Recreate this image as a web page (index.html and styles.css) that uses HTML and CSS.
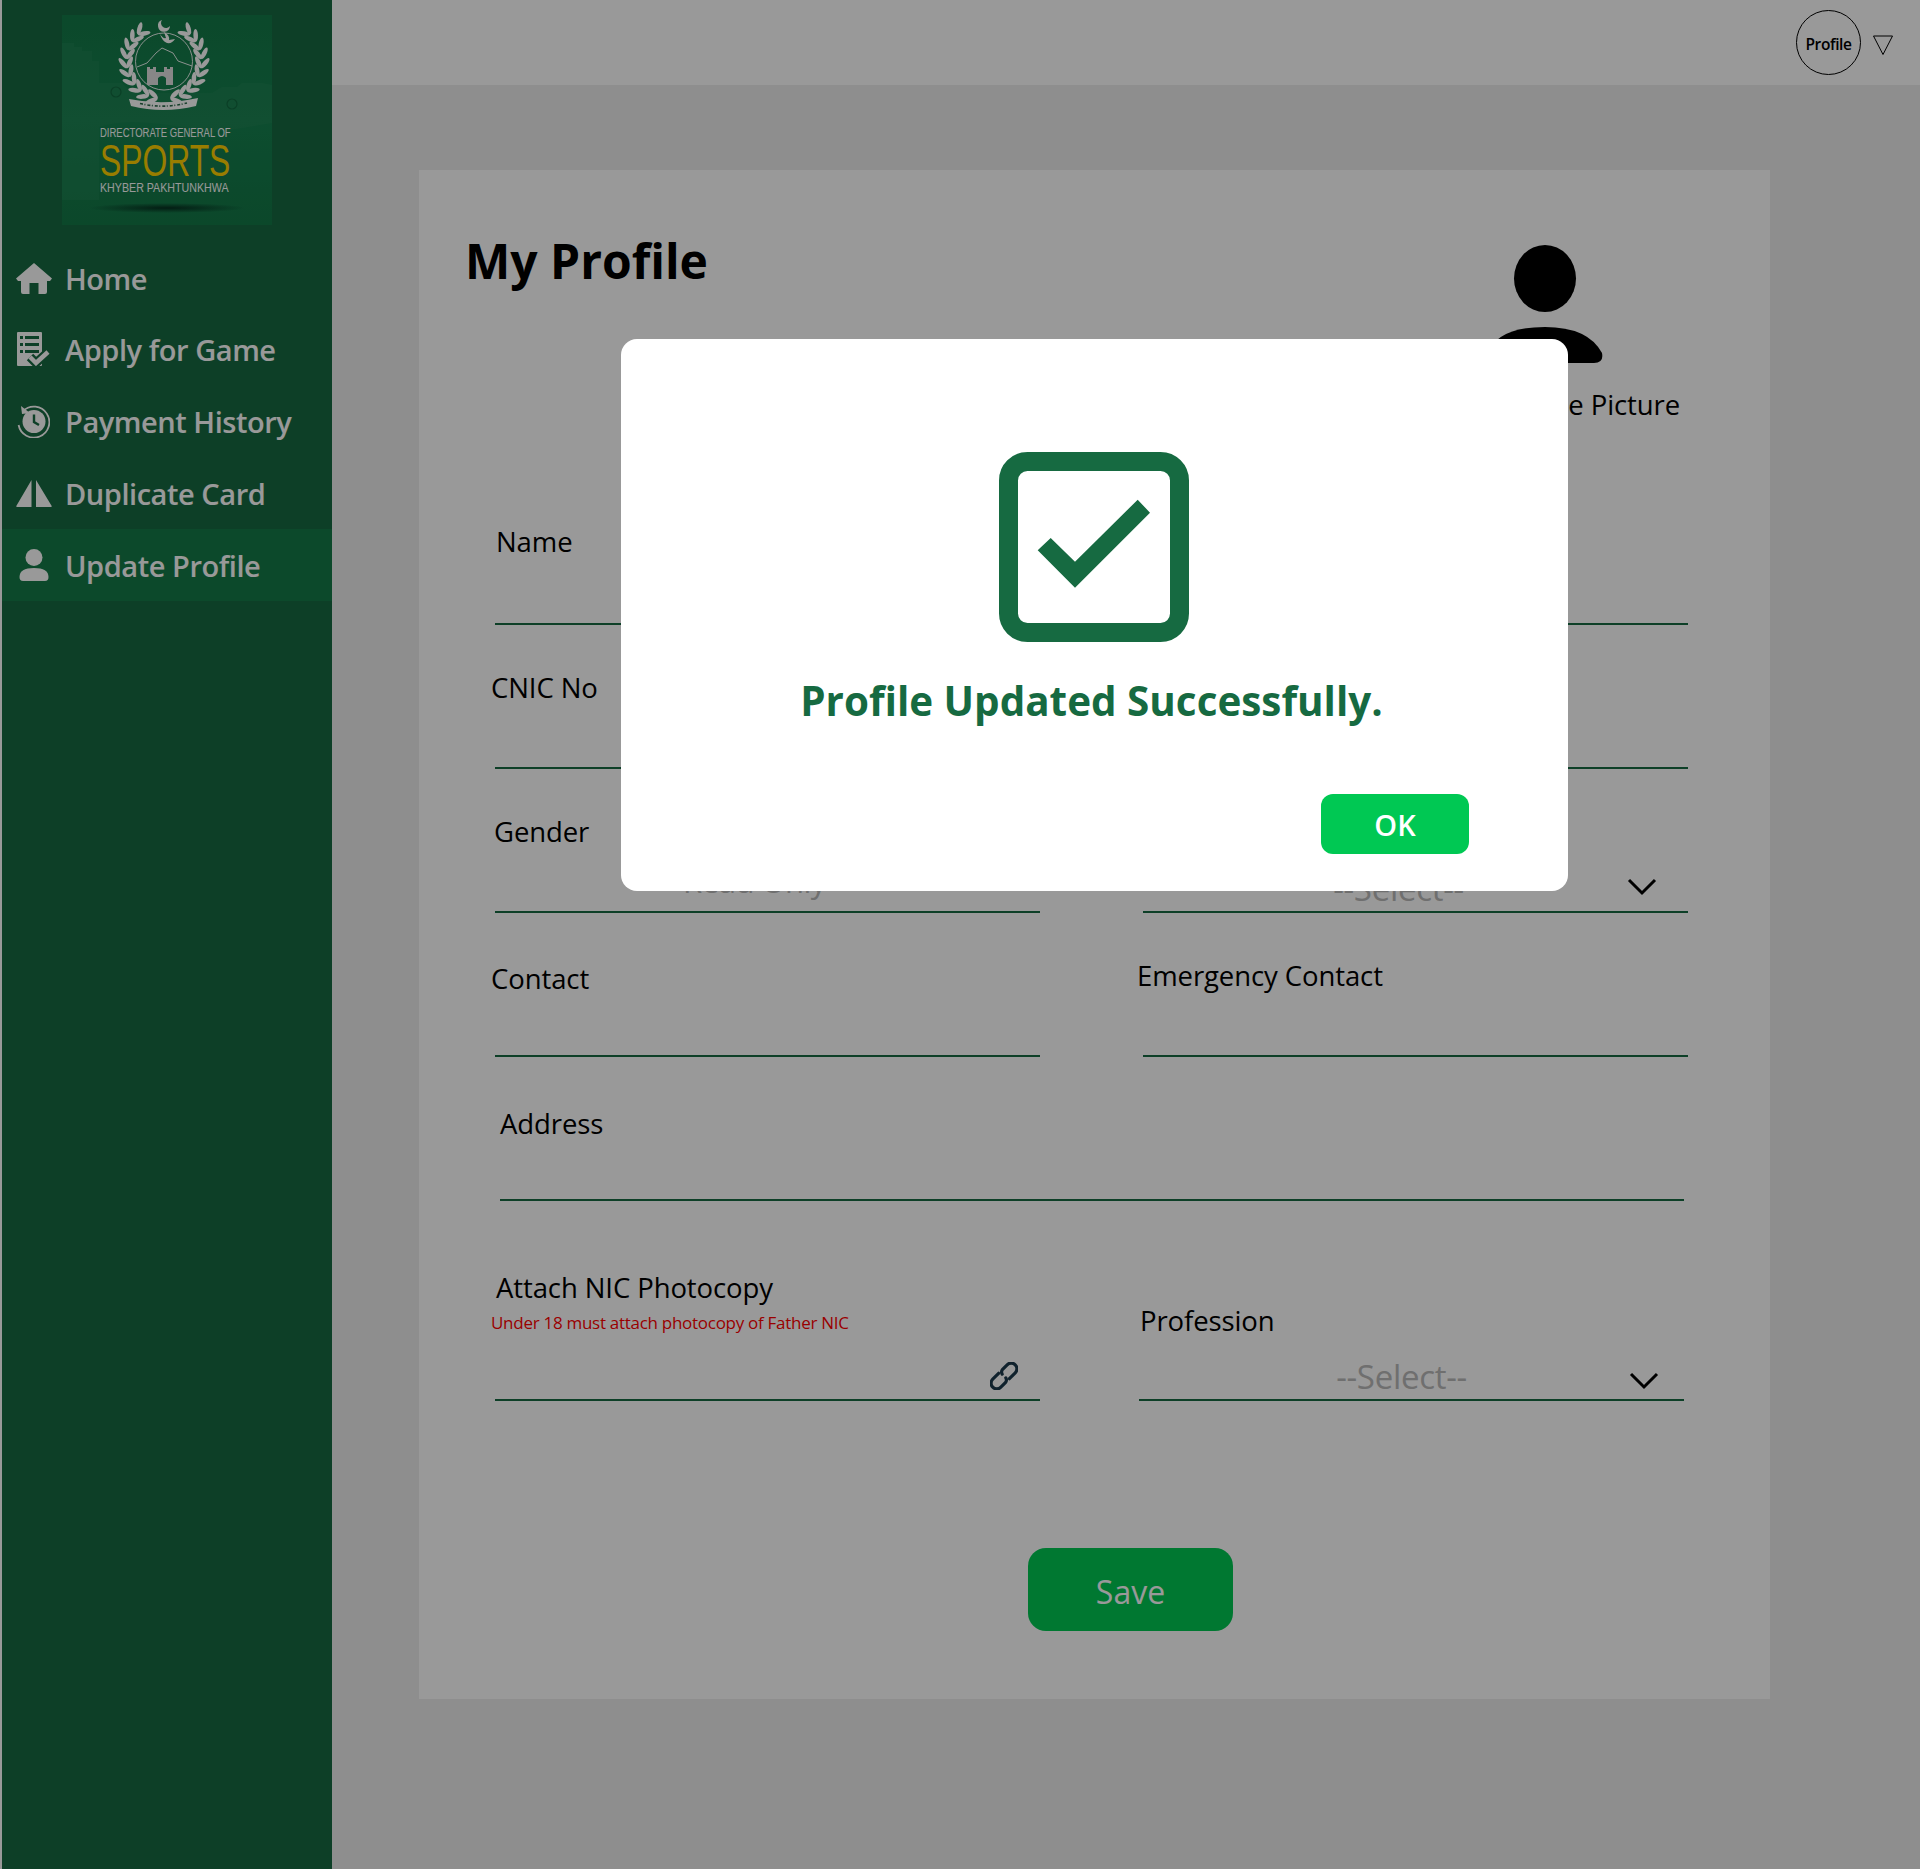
FILE: index.html

```html
<!DOCTYPE html>
<html lang="en">
<head>
    <meta charset="UTF-8">
    <meta name="viewport" content="width=device-width, initial-scale=1.0">
    <title>My Profile - Directorate General of Sports</title>
    <link rel="stylesheet" href="styles.css">
</head>
<body>

    <div class="app">
        <aside class="sidebar">
            <div class="logo-wrap">
                <svg class="logo" viewBox="0 0 210 210" width="210" height="210">
                    <defs>
                        <linearGradient id="logoBg" x1="0" y1="0" x2="0" y2="1">
                            <stop offset="0" stop-color="#137a48"/>
                            <stop offset="0.5" stop-color="#168150"/>
                            <stop offset="1" stop-color="#137847"/>
                        </linearGradient>
                        <radialGradient id="logoShadow">
                            <stop offset="0" stop-color="#04241a" stop-opacity="0.85"/>
                            <stop offset="1" stop-color="#04241a" stop-opacity="0"/>
                        </radialGradient>
                        <g id="leafPair" fill="#fff">
                            <ellipse rx="6.4" ry="2.3" transform="translate(4 -3.4) rotate(-32)"/>
                            <ellipse rx="6.4" ry="2.3" transform="translate(4 3.4) rotate(32)"/>
                        </g>
                        <g id="wreathSide">
                            <use href="#leafPair" transform="rotate(-168 102 46.5) translate(102 9)"/>
                            <use href="#leafPair" transform="rotate(-154 102 46.5) translate(102 9)"/>
                            <use href="#leafPair" transform="rotate(-140 102 46.5) translate(102 9)"/>
                            <use href="#leafPair" transform="rotate(-126 102 46.5) translate(102 9)"/>
                            <use href="#leafPair" transform="rotate(-112 102 46.5) translate(102 9)"/>
                            <use href="#leafPair" transform="rotate(-98 102 46.5) translate(102 9)"/>
                            <use href="#leafPair" transform="rotate(-84 102 46.5) translate(102 9)"/>
                            <use href="#leafPair" transform="rotate(-70 102 46.5) translate(102 9)"/>
                            <use href="#leafPair" transform="rotate(-56 102 46.5) translate(102 9)"/>
                            <use href="#leafPair" transform="rotate(-42 102 46.5) translate(102 9)"/>
                        </g>
                    </defs>
                    <rect width="210" height="210" fill="url(#logoBg)"/>
                    <!-- fort wall behind the emblem -->
                    <path d="M0 28 H12 V32 H20 V36 H30 V46 H37 V68 H60 L66 74 L80 78 H150 L160 72 H175 L180 68 H200 L210 70 V108 L150 118 Q70 100 37 112 V185 H0 Z" fill="#2a8a5c" opacity="0.35"/>
                    <circle cx="54" cy="77" r="5" fill="none" stroke="#126a40" stroke-width="1.2"/>
                    <circle cx="170" cy="89" r="5" fill="none" stroke="#126a40" stroke-width="1.2"/>
                    <!-- emblem -->
                    <g fill="none" stroke="#fff" stroke-width="0.9">
                        <circle cx="102" cy="46.5" r="28.5"/>
                        <path d="M75 52 L85 48 L94 38 L100 33 L111 38 L116 46 L130 51"/>
                    </g>
                    <path d="M100 5 a6 6 0 1 0 8 6 a5 5 0 0 1 -8 -6z" fill="#fff"/>
                    <path d="M98 19 q3 5 6 4 l-2 -6 q6 3 5 8 l6 -1 q-3 5 -8 4 q-5 -2 -7 -9z" fill="#fff"/>
                    <path d="M85 52 h3 v2 h3 v-2 h3 v5 h8 v-5 h3 v2 h3 v-2 h3 v18 h-7 v-7 q-4 -4 -8 0 v7 h-11z" fill="#e2e2e2"/>
                    <use href="#wreathSide"/>
                    <use href="#wreathSide" transform="translate(204 0) scale(-1 1)"/>
                    <path d="M67 84 Q101 91 136 83 L134 91 Q101 99 69 91 Z" fill="#fff"/>
                    <path d="M78 88.5 Q101 94 125 88" fill="none" stroke="#2b6b4c" stroke-width="1.6" stroke-dasharray="3 1.5 1 2"/>
                    <!-- logo wording -->
                    <text class="logo-small" transform="translate(38 122) scale(0.731 1)">DIRECTORATE GENERAL OF</text>
                    <text class="logo-big" transform="translate(38 161) scale(0.708 1)">SPORTS</text>
                    <text class="logo-small" transform="translate(38 177) scale(0.821 1)">KHYBER PAKHTUNKHWA</text>
                    <ellipse cx="105" cy="193" rx="78" ry="5" fill="url(#logoShadow)"/>
                </svg>
            </div>

            <nav class="nav">
                <a class="nav-item nav-home" href="#">
                    <span class="nav-icon">
                        <svg viewBox="0 0 36 31" width="36" height="31"><path d="M18 0 L36 15.5 L34 18 H31 V29 Q31 31 29 31 H22.5 V20 H13.5 V31 H7 Q5 31 5 29 V18 H2 L0 15.5 Z" fill="#fff"/></svg>
                    </span>
                    Home
                </a>
                <a class="nav-item" href="#">
                    <span class="nav-icon">
                        <svg viewBox="0 0 33 34" width="33" height="34">
                            <path d="M1 0 H24 Q25 0 25 1 V33 Q25 34 24 34 H1 Q0 34 0 33 V1 Q0 0 1 0 Z" fill="#fff"/>
                            <g fill="#166a41">
                                <rect x="3" y="4" width="3" height="3"/><rect x="8" y="4" width="14" height="3"/>
                                <rect x="3" y="11" width="3" height="3"/><rect x="8" y="11" width="14" height="3"/>
                                <rect x="3" y="18" width="3" height="3"/><rect x="8" y="18" width="14" height="3"/>
                            </g>
                            <path d="M13 25 L19 31 L31 20" fill="none" stroke="#166a41" stroke-width="9"/>
                            <path d="M13 25 L19 31 L31 20" fill="none" stroke="#fff" stroke-width="4.5"/>
                        </svg>
                    </span>
                    Apply for Game
                </a>
                <a class="nav-item" href="#">
                    <span class="nav-icon">
                        <svg viewBox="0 0 33 33" width="33" height="33">
                            <path d="M6 6 A15.5 15.5 0 1 1 1.6 20" fill="none" stroke="#fff" stroke-width="1.8"/>
                            <path d="M4 1 L5 9 L13 8 Z" fill="#fff"/>
                            <circle cx="17" cy="16.5" r="11.5" fill="#fff"/>
                            <path d="M17 9.5 V17 L22 20" fill="none" stroke="#166a41" stroke-width="2.4"/>
                        </svg>
                    </span>
                    Payment History
                </a>
                <a class="nav-item" href="#">
                    <span class="nav-icon">
                        <svg viewBox="0 0 36 27" width="36" height="27">
                            <path d="M15.5 0 V27 H1 Q0 27 0.3 26 Z M20 0 L35.7 26 Q36 27 35 27 H20 Z" fill="#fff"/>
                        </svg>
                    </span>
                    Duplicate Card
                </a>
                <a class="nav-item active" href="#">
                    <span class="nav-icon">
                        <svg viewBox="0 0 30 32" width="30" height="32">
                            <circle cx="15" cy="8.5" r="8.5" fill="#fff"/>
                            <path d="M0.5 28 Q0.5 19 15 19 Q29.5 19 29.5 28 Q29.5 32 26 32 H4 Q0.5 32 0.5 28 Z" fill="#fff"/>
                        </svg>
                    </span>
                    Update Profile
                </a>
            </nav>
        </aside>

        <div class="content">
            <header class="topbar">
                <div class="profile-circle">Profile</div>
                <svg class="profile-caret" viewBox="0 0 20 20" width="20" height="20"><path d="M0.5 1 H19.5 L10 19.5 Z" fill="none" stroke="#000" stroke-width="1"/></svg>
            </header>

            <main class="main">
                <section class="card">
                    <div class="card-head">
                        <h1>My Profile</h1>
                        <div class="avatar">
                            <svg viewBox="0 0 116 120" width="116" height="120">
                                <ellipse cx="57" cy="33.5" rx="31" ry="33.5" fill="#000"/>
                                <path d="M0 108 Q10 82 57 82 Q100 82 114 108 Q116 118 106 118 H8 Q-2 118 0 108 Z" fill="#000"/>
                            </svg>
                            <div class="avatar-label">Profile Picture</div>
                        </div>
                    </div>

                    <form class="form">
                        <div class="field field-name">
                            <label>Name</label>
                        </div>
                        <div class="field"></div>

                        <div class="field field-cnic">
                            <label>CNIC No</label>
                        </div>
                        <div class="field"></div>

                        <div class="field field-gender">
                            <label>Gender</label>
                            <div class="field-value value-readonly">Read Only</div>
                        </div>
                        <div class="field field-select">
                            <div class="field-value value-select">
                                <span>--Select--</span>
                                <svg class="chevron" viewBox="0 0 30 18" width="30" height="18"><path d="M2 2 L15 15 L28 2" fill="none" stroke="#000" stroke-width="3"/></svg>
                            </div>
                        </div>

                        <div class="field field-contact">
                            <label>Contact</label>
                        </div>
                        <div class="field field-emergency">
                            <label>Emergency Contact</label>
                        </div>

                        <div class="field field-address">
                            <label>Address</label>
                        </div>

                        <div class="field field-attach">
                            <label>Attach NIC Photocopy</label>
                            <div class="note">Under 18 must attach photocopy of Father NIC</div>
                            <div class="field-value value-attach">
                                <svg viewBox="3 3 22 22" width="28" height="28">
                                    <g transform="rotate(-45 14 14)" fill="none" stroke="#1b3a4b" stroke-width="2.5" stroke-linecap="round">
                                        <path d="M12.5 9.5 H6 a4.5 4.5 0 0 0 0 9 H11 a3.5 3.5 0 0 0 3 -2.5"/>
                                        <path d="M15.5 18.5 H22 a4.5 4.5 0 0 0 0 -9 H17 a3.5 3.5 0 0 0 -3 2.5"/>
                                    </g>
                                </svg>
                            </div>
                        </div>
                        <div class="field field-profession">
                            <label>Profession</label>
                            <div class="field-value value-select">
                                <span>--Select--</span>
                                <svg class="chevron" viewBox="0 0 30 18" width="30" height="18"><path d="M2 2 L15 15 L28 2" fill="none" stroke="#000" stroke-width="3"/></svg>
                            </div>
                        </div>
                    </form>

                    <button type="button" class="btn-save">Save</button>
                </section>
            </main>
        </div>
    </div>

    <div class="overlay">
        <div class="modal">
            <svg class="modal-icon" viewBox="0 0 190 190" width="190" height="190">
                <rect x="9.5" y="9.5" width="171" height="171" rx="19" fill="none" stroke="#166a41" stroke-width="19"/>
                <path d="M38.7 98.3 L51.7 86 L76 109.7 L138.7 47.7 L151 60.7 L76 135.7 Z" fill="#166a41"/>
            </svg>
            <h2>Profile Updated Successfully.</h2>
            <button type="button" class="btn-ok">OK</button>
        </div>
    </div>

</body>
</html>
```

FILE: styles.css

```css
* {
    box-sizing: border-box;
}
body {
    font-family: "Open Sans", "Noto Sans", sans-serif;
    background-color: #fff;
    margin: 0;
    padding: 0 0 0 2px;
    color: #000;
}
.app {
    display: flex;
    min-height: 100vh;
}

/* sidebar */
.sidebar {
    width: 330px;
    flex-shrink: 0;
    background-color: #166a41;
}
.logo-wrap {
    padding: 15px 0 0 60px;
    height: 243px;
}
.logo {
    display: block;
}
.logo-small {
    font-family: "Liberation Sans", sans-serif;
    font-size: 13px;
    fill: #fff;
}
.logo-big {
    font-family: "Liberation Sans", sans-serif;
    font-size: 45px;
    fill: #ffd000;
}
.nav-item {
    display: flex;
    align-items: center;
    height: 72px;
    padding-left: 13px;
    font-size: 29px;
    font-weight: 600;
    letter-spacing: -0.45px;
    color: #fff;
    text-decoration: none;
}
.nav-home {
    height: 70px;
}
.nav-item.active {
    background-color: #147b48;
}
.nav-icon {
    width: 37px;
    margin-right: 13px;
    display: flex;
    align-items: center;
    justify-content: center;
    flex-shrink: 0;
}
.nav-icon svg {
    display: block;
}

/* top bar */
.content {
    flex: 1;
    display: flex;
    flex-direction: column;
    background-color: #ededed;
}
.topbar {
    height: 85px;
    background-color: #fff;
    display: flex;
    align-items: center;
    justify-content: flex-end;
    padding: 0 27px 0 0;
}
.profile-circle {
    width: 65px;
    height: 65px;
    padding-top: 2px;
    border: 1px solid #000;
    border-radius: 50%;
    display: flex;
    align-items: center;
    justify-content: center;
    font-size: 15.5px;
    font-weight: 600;
    letter-spacing: -0.4px;
}
.profile-caret {
    margin: 4px 0 0 12px;
}

/* profile card */
.main {
    flex: 1;
    padding: 85px 150px 170px 87px;
}
.card {
    background-color: #fff;
    height: 1529px;
    padding: 0 82px 68px 76px;
}
.card-head {
    height: 311px;
    display: flex;
    justify-content: space-between;
}
.card-head h1 {
    margin: 55px 0 0 -30px;
    font-size: 48px;
    line-height: 72px;
    font-weight: 700;
    letter-spacing: 0;
}
.avatar {
    padding-top: 75px;
    margin-right: 8px;
    display: flex;
    flex-direction: column;
    align-items: flex-end;
}
.avatar svg {
    display: block;
    margin-right: 76px;
}
.avatar-label {
    font-size: 27.5px;
    line-height: 36px;
    margin-top: 22px;
    letter-spacing: -0.1px;
}

/* form */
.form {
    display: grid;
    grid-template-columns: 545px 545px;
    column-gap: 103px;
}
.field {
    height: 144px;
    border-bottom: 2px solid #166a41;
    display: flex;
    flex-direction: column;
    align-items: flex-start;
}
.field label {
    display: block;
    margin-top: 45px;
    font-size: 27.5px;
    line-height: 36px;
    letter-spacing: -0.1px;
}
.field-name label { margin: 43px 0 0 1px; }
.field-cnic label { margin-left: -4px; }
.field-gender label { margin-left: -1px; }
.field-contact label { margin: 48px 0 0 -4px; }
.field-emergency label { margin-left: -6px; }
.field-address {
    grid-column: 1 / -1;
    margin: 0 4px 0 5px;
}
.field-address label { margin-top: 49px; }
.field-attach {
    height: 200px;
}
.field-attach label {
    margin: 69px 0 0 1px;
}
.field-profession {
    height: 200px;
    margin: 0 4px 0 -4px;
}
.field-profession label {
    margin: 102px 0 0 1px;
}
.note {
    margin: 5px 0 0 -4px;
    font-size: 17px;
    line-height: 24px;
    letter-spacing: -0.28px;
    color: #f00;
}
.field-value {
    margin-top: auto;
    width: 100%;
    display: flex;
    align-items: center;
}
.value-readonly {
    height: 60px;
    justify-content: center;
    padding-right: 26px;
    font-size: 31px;
    color: #b9b9b9;
    letter-spacing: -0.5px;
}
.value-select {
    height: 46px;
    justify-content: center;
    padding-right: 34px;
    font-size: 33px;
    color: #b9b9b9;
    letter-spacing: -0.3px;
    position: relative;
}
.chevron {
    position: absolute;
    right: 31px;
    top: 13px;
}
.field-profession .value-select {
    padding-right: 20px;
}
.field-profession .chevron {
    right: 25px;
    top: 19px;
}
.value-attach {
    justify-content: flex-end;
    padding: 0 22px 9px 0;
}
.btn-save {
    display: block;
    width: 205px;
    height: 83px;
    margin: 147px 0 0 533px;
    padding-top: 4px;
    background-color: #00c853;
    color: #fff;
    font-family: inherit;
    font-size: 32px;
    border: none;
    border-radius: 18px;
}

/* success popup */
.overlay {
    position: fixed;
    inset: 0;
    background-color: rgba(0, 0, 0, 0.4);
}
.modal {
    width: 947px;
    height: 552px;
    margin: 339px 0 0 621px;
    background-color: #fff;
    border-radius: 16px;
    padding-top: 113px;
    display: flex;
    flex-direction: column;
    align-items: center;
}
.modal-icon {
    display: block;
    margin-left: -1px;
}
.modal h2 {
    margin: 33px 0 0 -6px;
    font-size: 40.4px;
    line-height: 52px;
    font-weight: 700;
    letter-spacing: 0;
    color: #166a41;
}
.btn-ok {
    width: 148px;
    height: 60px;
    margin: 67px 99px 0 auto;
    background-color: #00c853;
    color: #fff;
    font-family: inherit;
    font-size: 29px;
    font-weight: 600;
    border: none;
    border-radius: 12px;
}
```
